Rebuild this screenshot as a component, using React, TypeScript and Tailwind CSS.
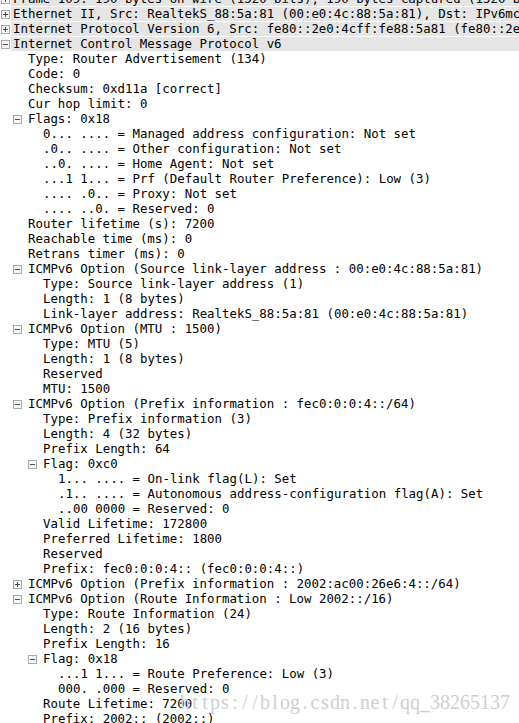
import React from "react";

type Row = [number, string, ("+" | "-")?];

const rows: Row[] = [
  [0, "Frame 109: 190 bytes on wire (1520 bits), 190 bytes captured (1520 bits) on interface 0", "+"],
  [0, "Ethernet II, Src: RealtekS_88:5a:81 (00:e0:4c:88:5a:81), Dst: IPv6mcast_01 (33:33:00:00:00:01)", "+"],
  [0, "Internet Protocol Version 6, Src: fe80::2e0:4cff:fe88:5a81 (fe80::2e0:4cff:fe88:5a81), Dst: ff02::1 (ff02::1)", "+"],
  [0, "Internet Control Message Protocol v6", "-"],
  [1, "Type: Router Advertisement (134)"],
  [1, "Code: 0"],
  [1, "Checksum: 0xd11a [correct]"],
  [1, "Cur hop limit: 0"],
  [1, "Flags: 0x18", "-"],
  [2, "0... .... = Managed address configuration: Not set"],
  [2, ".0.. .... = Other configuration: Not set"],
  [2, "..0. .... = Home Agent: Not set"],
  [2, "...1 1... = Prf (Default Router Preference): Low (3)"],
  [2, ".... .0.. = Proxy: Not set"],
  [2, ".... ..0. = Reserved: 0"],
  [1, "Router lifetime (s): 7200"],
  [1, "Reachable time (ms): 0"],
  [1, "Retrans timer (ms): 0"],
  [1, "ICMPv6 Option (Source link-layer address : 00:e0:4c:88:5a:81)", "-"],
  [2, "Type: Source link-layer address (1)"],
  [2, "Length: 1 (8 bytes)"],
  [2, "Link-layer address: RealtekS_88:5a:81 (00:e0:4c:88:5a:81)"],
  [1, "ICMPv6 Option (MTU : 1500)", "-"],
  [2, "Type: MTU (5)"],
  [2, "Length: 1 (8 bytes)"],
  [2, "Reserved"],
  [2, "MTU: 1500"],
  [1, "ICMPv6 Option (Prefix information : fec0:0:0:4::/64)", "-"],
  [2, "Type: Prefix information (3)"],
  [2, "Length: 4 (32 bytes)"],
  [2, "Prefix Length: 64"],
  [2, "Flag: 0xc0", "-"],
  [3, "1... .... = On-link flag(L): Set"],
  [3, ".1.. .... = Autonomous address-configuration flag(A): Set"],
  [3, "..00 0000 = Reserved: 0"],
  [2, "Valid Lifetime: 172800"],
  [2, "Preferred Lifetime: 1800"],
  [2, "Reserved"],
  [2, "Prefix: fec0:0:0:4:: (fec0:0:0:4::)"],
  [1, "ICMPv6 Option (Prefix information : 2002:ac00:26e6:4::/64)", "+"],
  [1, "ICMPv6 Option (Route Information : Low 2002::/16)", "-"],
  [2, "Type: Route Information (24)"],
  [2, "Length: 2 (16 bytes)"],
  [2, "Prefix Length: 16"],
  [2, "Flag: 0x18", "-"],
  [3, "...1 1... = Route Preference: Low (3)"],
  [3, "000. .000 = Reserved: 0"],
  [2, "Route Lifetime: 7200"],
  [2, "Prefix: 2002:: (2002::)"],
];

const indent: Record<number, string> = {
  1: "w-[13px]",
  2: "w-[28px]",
  3: "w-[43px]",
};

function Box({ kind }: { kind: "+" | "-" }) {
  return (
    <svg width="9" height="9" viewBox="0 0 9 9" className="block">
      <rect x="0.5" y="0.5" width="8" height="8" fill="#f7f7f7" stroke="#a9a9a9" />
      <line x1="2" y1="4.5" x2="7" y2="4.5" stroke="#4a4a4a" />
      {kind === "+" && <line x1="4.5" y1="2" x2="4.5" y2="7" stroke="#4a4a4a" />}
    </svg>
  );
}

const watermark = "https://blog.csdn.net/qq_38265137";

export default function App() {
  return (
    <div className="relative w-[519px] h-[723px] overflow-hidden bg-white text-black font-['DejaVu_Sans_Mono',monospace] text-[12.4px]">
      <div className="mt-[-8px]">
        {rows.map(([level, text, exp], i) =>
          level === 0 ? (
            <div key={i} className="flex h-[15px]">
              <div className="w-[11px] shrink-0 flex items-center pl-[1px] pb-[1px]">
                {exp && <Box kind={exp} />}
              </div>
              <div className="flex-1 bg-[#e5e5e5] border-b border-white pl-[2px] whitespace-pre leading-[14px] overflow-hidden">
                {text}
              </div>
            </div>
          ) : (
            <div key={i} className="flex h-[15px]">
              <div className={`${indent[level]} shrink-0`} />
              <div className="w-[15px] shrink-0 flex items-center pb-[1px]">
                {exp && <Box kind={exp} />}
              </div>
              <div className="whitespace-pre leading-[14px]">{text}</div>
            </div>
          )
        )}
      </div>
      <div className="absolute left-[180px] top-[692px] flex pointer-events-none font-['Liberation_Serif',serif] text-[20px] leading-[20px] text-[#cfcfcf]">
        {watermark.split("").map((c, i) => (
          <span key={i} className="inline-block w-[10px] text-center">
            {c}
          </span>
        ))}
      </div>
    </div>
  );
}
